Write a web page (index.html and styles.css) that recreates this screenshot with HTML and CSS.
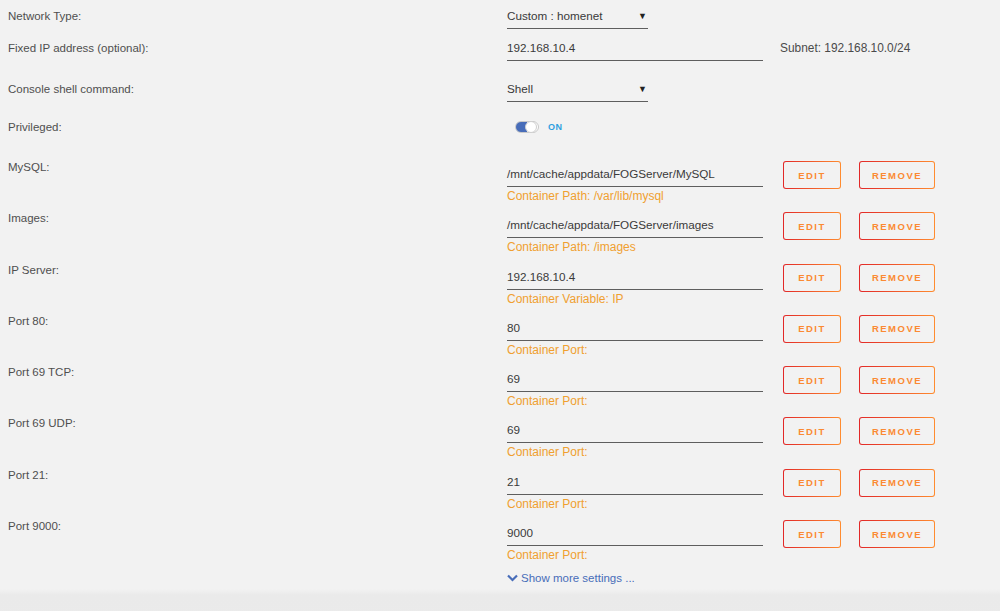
FILE: index.html
```html
<!DOCTYPE html>
<html>
<head>
<meta charset="utf-8">
<link rel="stylesheet" href="styles.css">
</head>
<body>
<div class="page">
  <div class="row r1">
    <div class="label">Network Type:</div>
    <div class="field select">Custom : homenet<span class="caret">▼</span></div>
  </div>
  <div class="row r2">
    <div class="label">Fixed IP address (optional):</div>
    <div class="field wide">192.168.10.4</div>
    <div class="note">Subnet: 192.168.10.0/24</div>
  </div>
  <div class="row r3">
    <div class="label">Console shell command:</div>
    <div class="field select">Shell<span class="caret">▼</span></div>
  </div>
  <div class="row r4">
    <div class="label">Privileged:</div>
    <div class="toggle-wrap"><span class="toggle"><span class="knob"></span></span><span class="on">ON</span></div>
  </div>

  <div class="cfg">
    <div class="label">MySQL:</div>
    <div class="val"><div class="field wide">/mnt/cache/appdata/FOGServer/MySQL</div><div class="hint">Container Path: /var/lib/mysql</div></div>
    <div class="btns"><span class="btn edit">EDIT</span><span class="btn remove">REMOVE</span></div>
  </div>
  <div class="cfg">
    <div class="label">Images:</div>
    <div class="val"><div class="field wide">/mnt/cache/appdata/FOGServer/images</div><div class="hint">Container Path: /images</div></div>
    <div class="btns"><span class="btn edit">EDIT</span><span class="btn remove">REMOVE</span></div>
  </div>
  <div class="cfg">
    <div class="label">IP Server:</div>
    <div class="val"><div class="field wide">192.168.10.4</div><div class="hint">Container Variable: IP</div></div>
    <div class="btns"><span class="btn edit">EDIT</span><span class="btn remove">REMOVE</span></div>
  </div>
  <div class="cfg">
    <div class="label">Port 80:</div>
    <div class="val"><div class="field wide">80</div><div class="hint">Container Port:</div></div>
    <div class="btns"><span class="btn edit">EDIT</span><span class="btn remove">REMOVE</span></div>
  </div>
  <div class="cfg">
    <div class="label">Port 69 TCP:</div>
    <div class="val"><div class="field wide">69</div><div class="hint">Container Port:</div></div>
    <div class="btns"><span class="btn edit">EDIT</span><span class="btn remove">REMOVE</span></div>
  </div>
  <div class="cfg">
    <div class="label">Port 69 UDP:</div>
    <div class="val"><div class="field wide">69</div><div class="hint">Container Port:</div></div>
    <div class="btns"><span class="btn edit">EDIT</span><span class="btn remove">REMOVE</span></div>
  </div>
  <div class="cfg">
    <div class="label">Port 21:</div>
    <div class="val"><div class="field wide">21</div><div class="hint">Container Port:</div></div>
    <div class="btns"><span class="btn edit">EDIT</span><span class="btn remove">REMOVE</span></div>
  </div>
  <div class="cfg">
    <div class="label">Port 9000:</div>
    <div class="val"><div class="field wide">9000</div><div class="hint">Container Port:</div></div>
    <div class="btns"><span class="btn edit">EDIT</span><span class="btn remove">REMOVE</span></div>
  </div>

  <div class="more"><svg class="chev" width="11" height="8" viewBox="0 0 11 8"><path d="M1 1.5 L5.5 6 L10 1.5" fill="none" stroke="#486db9" stroke-width="2.2"/></svg>Show more settings ...</div>
</div>
<div class="band">
  <div class="more alloc"><svg class="chev" width="11" height="8" viewBox="0 0 11 8"><path d="M1 1.5 L5.5 6 L10 1.5" fill="none" stroke="#486db9" stroke-width="2.2"/></svg>Show docker allocations ...</div>
</div>
</body>
</html>
```

FILE: styles.css
```css
html, body {
  margin: 0;
  padding: 0;
  background: #f2f2f2;
  overflow: hidden;
  height: 611px;
}
body {
  font-family: "Liberation Sans", Arial, sans-serif;
  font-size: 11.5px;
  color: #4a4a4a;
}
.page {
  padding: 6px 0 0 8px;
}
.row {
  display: flex;
  align-items: flex-start;
}
.label {
  width: 499px;
  flex: none;
  line-height: 20px;
  font-size: 11.5px;
  color: #4f4f4f;
}
.r1 { height: 32px; }
.r2 { height: 41px; }
.r3 { height: 38px; }
.r4 { height: 40px; }
.field {
  box-sizing: border-box;
  line-height: 20px;
  padding-bottom: 2px;
  border-bottom: 1px solid #5e5e5e;
  font-size: 11.7px;
  color: #3a3a3a;
  position: relative;
  white-space: nowrap;
}
.select { width: 141px; }
.wide { width: 256px; }
.caret {
  position: absolute;
  right: 1px;
  top: 0;
  font-size: 9px;
  color: #222;
}
.note {
  margin-left: 17px;
  line-height: 20px;
  font-size: 11.9px;
  color: #4a4a4a;
}
.toggle-wrap {
  display: flex;
  align-items: center;
  height: 20px;
  padding-left: 8px;
  gap: 9px;
}
.toggle {
  width: 22px;
  height: 10px;
  border: 1px solid #c9c9c9;
  border-radius: 6px;
  background: linear-gradient(90deg, #486db9 0 50%, #ffffff 50% 100%);
  position: relative;
  display: inline-block;
}
.knob {
  position: absolute;
  left: 9px;
  top: -1px;
  width: 12px;
  height: 12px;
  border-radius: 6px;
  background: #fff;
  border: 1px solid #cfcfcf;
  box-sizing: border-box;
}
.on {
  color: #2f9fe0;
  font-size: 9px;
  font-weight: bold;
  letter-spacing: 0.5px;
}
.cfg {
  display: flex;
  align-items: flex-start;
  height: 51.3px;
}
.val {
  padding-top: 7px;
  width: 256px;
  flex: none;
}
.hint {
  color: #f0a030;
  line-height: 14px;
  margin-top: 2px;
  font-size: 12px;
}
.btns {
  display: flex;
  gap: 18px;
  margin-left: 20px;
  margin-top: 4px;
}
.btn {
  box-sizing: border-box;
  height: 28px;
  display: flex;
  align-items: center;
  justify-content: center;
  border: 1px solid transparent;
  border-radius: 3px;
  background: linear-gradient(#f2f2f2, #f2f2f2) padding-box, linear-gradient(90deg, #e22828, #ff8c2f) border-box;
  color: #fb8a33;
  font-size: 9.5px;
  font-weight: bold;
  letter-spacing: 1.5px;
}
.edit { width: 58px; }
.remove { width: 76px; }
.more {
  margin-left: 499px;
  line-height: 20px;
  height: 20px;
  color: #486db9;
  display: flex;
  align-items: center;
  gap: 3px;
  font-size: 11.5px;
  margin-top: 0.6px;
}
.chev { flex: none; }
.band {
  margin-top: 1px;
  height: 40px;
  background: linear-gradient(#f2f2f2, #eaeaea 6px, #ebebeb);
  padding-top: 17px;
  padding-left: 8px;
}
```
